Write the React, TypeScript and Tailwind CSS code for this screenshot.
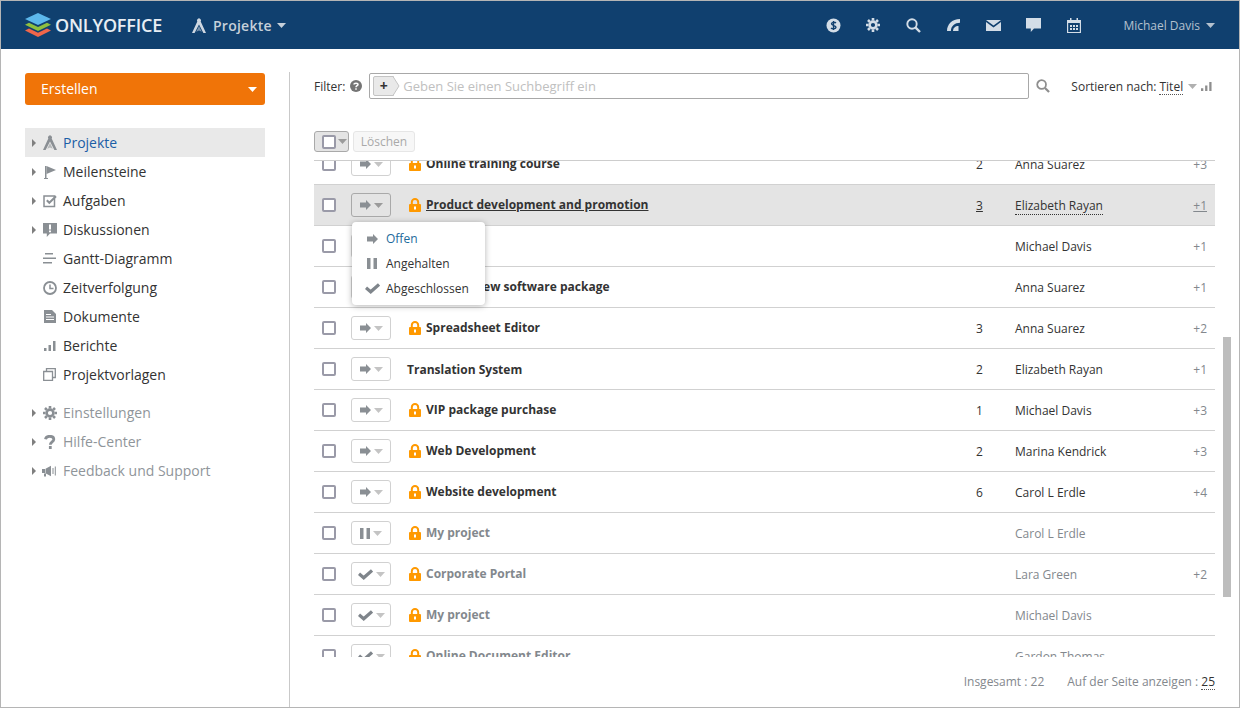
import type { ReactNode } from "react";

const font = "font-['Open_Sans',sans-serif]";

function Caret({ className = "" }: { className?: string }) {
  return (
    <svg width="9" height="5" viewBox="0 0 9 5" className={className} fill="currentColor">
      <path d="M0 0h9L4.500 5z" />
    </svg>
  );
}

function SideArrow() {
  return (
    <svg width="4" height="8" viewBox="0 0 4 8" fill="#7f7f7f">
      <path d="M0 0l4 4-4 4z" />
    </svg>
  );
}

function Logo() {
  return (
    <svg width="26" height="24" viewBox="0 0 26 24">
      <path d="M0 17.500l4-1.900 9 4.200 9-4.200 4 1.900L13 24z" fill="#f0664a" />
      <path d="M0 11.700l4-1.900 9 4.200 9-4.200 4 1.900L13 18z" fill="#8ec03f" />
      <path d="M0 6l13-6 13 6-13 6z" fill="#5cb8ec" />
    </svg>
  );
}

function CompassIcon({ color = "#8a8f94", size = 14 }: { color?: string; size?: number }) {
  return (
    <svg width={size} height={size + 1} viewBox="0 0 14 15" fill={color}>
      <path d="M5.300 3.500a2 2 0 1 1 3.400 0L14 15h-2.600L7 6.500 2.600 15H0z" />
      <path d="M7 8l2.800 5.800L7 12.500l-2.800 1.300z" opacity="0.55" />
    </svg>
  );
}

function FlagIcon() {
  return (
    <svg width="14" height="14" viewBox="0 0 14 14" fill="#8a8f94">
      <path d="M2 1h1.500v12H5v1H1v-1h1z" />
      <path d="M3.500 1L13 5 3.500 9z" />
    </svg>
  );
}

function TaskIcon() {
  return (
    <svg width="14" height="14" viewBox="0 0 14 14" fill="none">
      <path d="M1 2h10.500v10.500H1z" stroke="#8a8f94" strokeWidth="1.500" />
      <path d="M3.800 6.300l2.500 2.500L13 2.300" stroke="#8a8f94" strokeWidth="2" />
    </svg>
  );
}

function DiscussIcon() {
  return (
    <svg width="14" height="14" viewBox="0 0 14 14">
      <path d="M0 0h14v10.500H7L3.800 14v-3.500H0z" fill="#8a8f94" />
      <path d="M6 1.500h2v5H6zM6 7.500h2v1.800H6z" fill="#fff" />
    </svg>
  );
}

function GanttIcon() {
  return (
    <svg width="13" height="11" viewBox="0 0 13 11" fill="#8a8f94">
      <path d="M2 0h8v1.500H2zM0 4.500h13V6H0zM0 9h9v1.500H0z" />
    </svg>
  );
}

function ClockIcon() {
  return (
    <svg width="14" height="14" viewBox="0 0 14 14" fill="none" stroke="#8a8f94">
      <circle cx="7" cy="7" r="6" strokeWidth="1.800" />
      <path d="M7 3.500V7.500H10.500" strokeWidth="1.500" />
    </svg>
  );
}

function DocIcon() {
  return (
    <svg width="12" height="13" viewBox="0 0 12 13">
      <path d="M0 0h8l4 4v9H0z" fill="#8a8f94" />
      <path d="M2 4h5v1H2zM2 6.500h8v1H2zM2 9h8v1H2z" fill="#fff" />
    </svg>
  );
}

function ChartIcon({ color = "#8a8f94", size = 12 }: { color?: string; size?: number }) {
  return (
    <svg width={size} height={size} viewBox="0 0 12 12" fill={color}>
      <path d="M0 8h2.500v3H0zM4.500 5H7v6H4.500zM9 1h2.500v10H9z" />
    </svg>
  );
}

function TemplateIcon() {
  return (
    <svg width="13" height="13" viewBox="0 0 13 13" fill="none" stroke="#8a8f94" strokeWidth="1.300">
      <path d="M.7 3.500h8.800v8.800H.7z" />
      <path d="M3.500 3.500V.7h8.800v8.800H9.500" />
    </svg>
  );
}

function GearIcon({ color = "#8a8f94", size = 14 }: { color?: string; size?: number }) {
  return (
    <svg width={size} height={size} viewBox="0 0 14 14" fill="none" stroke={color}>
      <circle cx="7" cy="7" r="3.400" strokeWidth="2.600" />
      <path
        d="M7 0v2.500M7 11.500V14M0 7h2.500M11.500 7H14M2 2l1.800 1.800M10.200 10.200L12 12M2 12l1.800-1.800M10.200 3.800L12 2"
        strokeWidth="2.600"
      />
    </svg>
  );
}

function HelpIcon() {
  return (
    <svg width="12" height="14" viewBox="0 0 12 14" fill="none" stroke="#8a8f94" strokeWidth="2.800">
      <path d="M1.500 4.200C1.800 2.300 3.700 1.300 5.800 1.300c2.300 0 4 1.100 4 3 0 2.600-3.500 2.600-3.500 5.400" />
      <path d="M6.300 11v3" />
    </svg>
  );
}

function MegaphoneIcon() {
  return (
    <svg width="15" height="12" viewBox="0 0 15 12" fill="#8a8f94">
      <path d="M0 4h3v4H0zM3.500 3.800L9 .8v10.400L3.500 8.200zM2 8.500h2v3H2z" />
      <path d="M10.500 3h1v6h-1zM12.800 1.500h1v9h-1z" />
    </svg>
  );
}

function SearchIcon({ color, size }: { color: string; size: number }) {
  return (
    <svg width={size} height={size} viewBox="0 0 15 15" fill="none" stroke={color}>
      <circle cx="6" cy="6" r="4.700" strokeWidth="1.900" />
      <path d="M9.600 9.600L14 14" strokeWidth="2.400" />
    </svg>
  );
}

function ArrowStatus({ color = "#8a8f94" }: { color?: string }) {
  return (
    <svg width="11" height="10" viewBox="0 0 11 10" fill={color}>
      <path d="M0 2.500h6V0l5 5-5 5V7.500H0z" />
    </svg>
  );
}

function PauseStatus() {
  return (
    <svg width="10" height="11" viewBox="0 0 10 11" fill="#8a8f94">
      <path d="M0 0h3.500v11H0zM6.500 0H10v11H6.500z" />
    </svg>
  );
}

function CheckStatus() {
  return (
    <svg width="15" height="11" viewBox="0 0 15 11" fill="none" stroke="#7f858b" strokeWidth="3.200">
      <path d="M1 4.800l4.700 4L14 1.400" />
    </svg>
  );
}

function LockIcon() {
  return (
    <svg width="12" height="14" viewBox="0 0 12 14" className="shrink-0">
      <path d="M2.800 6.500V4.300a3.200 3.200 0 0 1 6.400 0v2.200" fill="none" stroke="#ff9900" strokeWidth="2" />
      <rect y="6" width="12" height="8" rx="1" fill="#ff9900" />
      <rect x="5" y="8.500" width="2" height="3" fill="#fff" />
    </svg>
  );
}

function Checkbox() {
  return <span className="block w-[14px] h-[14px] rounded-[2px] border-2 border-[#9a9aa8] bg-white shrink-0" />;
}

type NavItem = { label: string; icon: ReactNode; arrow?: boolean; active?: boolean };

const mainNav: NavItem[] = [
  { label: "Projekte", icon: <CompassIcon />, arrow: true, active: true },
  { label: "Meilensteine", icon: <FlagIcon />, arrow: true },
  { label: "Aufgaben", icon: <TaskIcon />, arrow: true },
  { label: "Diskussionen", icon: <DiscussIcon />, arrow: true },
  { label: "Gantt-Diagramm", icon: <GanttIcon /> },
  { label: "Zeitverfolgung", icon: <ClockIcon /> },
  { label: "Dokumente", icon: <DocIcon /> },
  { label: "Berichte", icon: <ChartIcon /> },
  { label: "Projektvorlagen", icon: <TemplateIcon /> },
];

const bottomNav: NavItem[] = [
  { label: "Einstellungen", icon: <GearIcon />, arrow: true },
  { label: "Hilfe-Center", icon: <HelpIcon />, arrow: true },
  { label: "Feedback und Support", icon: <MegaphoneIcon />, arrow: true },
];

function NavRow({ item, muted }: { item: NavItem; muted?: boolean }) {
  return (
    <div className={`flex items-center h-[29px] text-[14px] ${item.active ? "bg-[#e9e9e9] text-[#1b5ea6]" : muted ? "text-[#8f959a]" : "text-[#333]"}`}>
      <span className="w-[7px] ml-[7px] flex justify-start">{item.arrow && <SideArrow />}</span>
      <span className="w-[15px] ml-[3px] flex justify-center">{item.icon}</span>
      <span className="ml-[6px]">{item.label}</span>
    </div>
  );
}

type Project = {
  name: string;
  status: "open" | "paused" | "done";
  locked?: boolean;
  count?: string;
  person: string;
  extra?: string;
  hover?: boolean;
};

const projects: Project[] = [
  { name: "Online training course", status: "open", locked: true, count: "2", person: "Anna Suarez", extra: "+3" },
  { name: "Product development and promotion", status: "open", locked: true, count: "3", person: "Elizabeth Rayan", extra: "+1", hover: true },
  // these two sit behind the open status menu
  { name: "Project", status: "open", locked: true, person: "Michael Davis", extra: "+1" },
  { name: "Release new software package", status: "open", locked: true, person: "Anna Suarez", extra: "+1" },
  { name: "Spreadsheet Editor", status: "open", locked: true, count: "3", person: "Anna Suarez", extra: "+2" },
  { name: "Translation System", status: "open", count: "2", person: "Elizabeth Rayan", extra: "+1" },
  { name: "VIP package purchase", status: "open", locked: true, count: "1", person: "Michael Davis", extra: "+3" },
  { name: "Web Development", status: "open", locked: true, count: "2", person: "Marina Kendrick", extra: "+3" },
  { name: "Website development", status: "open", locked: true, count: "6", person: "Carol L Erdle", extra: "+4" },
  { name: "My project", status: "paused", locked: true, person: "Carol L Erdle" },
  { name: "Corporate Portal", status: "done", locked: true, person: "Lara Green", extra: "+2" },
  { name: "My project", status: "done", locked: true, person: "Michael Davis" },
  { name: "Online Document Editor", status: "done", locked: true, person: "Gardon Thomas" },
];

function ProjectRow({ p }: { p: Project }) {
  const closed = p.status !== "open";
  return (
    <div className={`flex items-center h-[41px] border-b border-[#d1d1d1] ${p.hover ? "bg-[#e4e4e4]" : ""}`}>
      <span className="ml-[8px] w-[29px]">
        <Checkbox />
      </span>
      <span className={`w-[40px] h-[24px] rounded-[3px] border flex items-center justify-center gap-[3px] shrink-0 ${p.hover ? "border-[#a9a9a9]" : "border-[#d1d1d1]"}`}>
        {p.status === "open" && <ArrowStatus />}
        {p.status === "paused" && <PauseStatus />}
        {p.status === "done" && <CheckStatus />}
        <Caret className={p.hover ? "text-[#9b9b9b]" : "text-[#c4c4c4]"} />
      </span>
      <div className={`w-[585px] flex items-center text-[12px] font-bold ${p.locked ? "pl-[18px] gap-[5px]" : "pl-[16px] pt-[2px]"} ${closed ? "text-[#83888d]" : "text-[#333]"}`}>
        {p.locked && <LockIcon />}
        <span className={p.hover ? "underline" : ""}>{p.name}</span>
      </div>
      <span className={`w-[39px] pt-[2px] text-[12px] text-[#333] ${p.hover ? "underline" : ""}`}>{p.count}</span>
      <span className={`w-[176px] pt-[2px] text-[12px] ${closed ? "text-[#83888d]" : "text-[#333]"}`}>
        <span className={p.hover ? "border-b border-dotted border-[#333]" : ""}>{p.person}</span>
      </span>
      <span className={`pt-[2px] text-[12px] w-[16px] text-right text-[#83888d] ${p.hover ? "underline" : ""}`}>{p.extra}</span>
    </div>
  );
}

export default function App() {
  return (
    <div className={`w-[1240px] h-[708px] border border-[#b5b5b5] flex flex-col bg-white overflow-hidden relative ${font}`}>
      <header className="h-[48px] bg-[#10406f] flex items-center shrink-0">
        <div className="ml-[24px]">
          <Logo />
        </div>
        <span className="ml-[4px] text-[18px] font-semibold text-[#e8eef4] tracking-[-0.2px]">ONLYOFFICE</span>
        <span className="ml-[30px]">
          <CompassIcon color="#cfd8e2" />
        </span>
        <span className="ml-[7px] text-[14px] font-semibold text-[#c6d0da] tracking-[0.25px]">Projekte</span>
        <Caret className="ml-[5px] text-[#c6d0da]" />
        <div className="ml-auto flex items-center">
          <svg width="15" height="15" viewBox="0 0 15 15">
            <circle cx="7.500" cy="7.500" r="7" fill="#d3dde7" />
            <path d="M10 5C9 4 5.500 4 5.500 5.800S10 7.500 10 9.300 6 11 5 10M7.500 3v9" fill="none" stroke="#10406f" strokeWidth="1.400" />
          </svg>
          <span className="ml-[25px]">
            <GearIcon color="#d3dde7" />
          </span>
          <span className="ml-[26px]">
            <SearchIcon color="#d3dde7" size={15} />
          </span>
          <svg width="13" height="12" viewBox="0 0 13 12" fill="#d3dde7" className="ml-[26px]">
            <path d="M0 12C0 5.500 5 0 13 0v3.800C8 3.800 3.900 7 3.900 12z" />
            <path d="M6 12c0-3 2.300-5 5.500-5v5z" />
          </svg>
          <svg width="15" height="11" viewBox="0 0 15 11" fill="#d3dde7" className="ml-[26px]">
            <path d="M0 0h15L7.500 5.500zM0 2l7.500 5.500L15 2v9H0z" />
          </svg>
          <svg width="15" height="14" viewBox="0 0 15 14" fill="#d3dde7" className="ml-[25px]">
            <path d="M0 0h15v10.500H8L4.800 14v-3.500H0z" />
          </svg>
          <svg width="14" height="15" viewBox="0 0 14 15" className="ml-[26px]" fill="none">
            <path d="M.6 2.500h12.800v12H.6z" stroke="#d3dde7" strokeWidth="1.200" />
            <path d="M0 2h14v3H0zM3 0h1.500v2H3zM9.500 0H11v2H9.500z" fill="#d3dde7" />
            <path d="M3 7h2v2H3zM6 7h2v2H6zM9 7h2v2H9zM3 10h2v2H3zM6 10h2v2H6zM9 10h2v2H9z" fill="#d3dde7" />
          </svg>
          <span className="ml-[42px] pt-[1px] text-[12px] text-[#b4c1ce]">Michael Davis</span>
          <Caret className="ml-[6px] mr-[24px] text-[#b4c1ce]" />
        </div>
      </header>

      <div className="flex flex-1 min-h-0">
        <aside className="w-[288px] shrink-0 pl-[24px] pr-[24px] pt-[24px]">
          <div className="h-[32px] rounded-[3px] bg-[#f07408] flex items-center justify-between pl-[16px] pr-[8px] pb-[2px] text-white text-[14px]">
            <span>Erstellen</span>
            <Caret className="mt-[2px]" />
          </div>
          <nav className="mt-[23px]">
            {mainNav.map((item) => (
              <NavRow key={item.label} item={item} />
            ))}
          </nav>
          <nav className="mt-[9px]">
            {bottomNav.map((item) => (
              <NavRow key={item.label} item={item} muted />
            ))}
          </nav>
        </aside>

        <main className="flex-1 min-w-0 mt-[23px] border-l border-[#c9c9c9] pl-[24px] pr-[24px] flex flex-col">
          <div className="flex items-center h-[26px] mt-[1px] text-[12px] text-[#333]">
            <span className="pt-[2px]">Filter:</span>
            <svg width="12" height="12" viewBox="0 0 12 12" className="ml-[5px]">
              <circle cx="6" cy="6" r="6" fill="#757575" />
              <path d="M4 4.500C4 2.800 8 2.800 8 4.500 8 5.800 6 5.600 6 7.300M6 8.300v1.500" fill="none" stroke="#fff" strokeWidth="1.500" />
            </svg>
            <div className="ml-[7px] w-[660px] h-[26px] rounded-[2px] border border-[#a8a8a8] flex items-center pl-[3px]">
              <span className="h-[20px] w-[21px] bg-[#e9e9e9] border border-[#c4c4c4] rounded-l-[2px] flex items-center justify-center font-bold text-[14px] text-[#333] leading-none">+</span>
              <svg width="7" height="20" viewBox="0 0 7 20" className="-ml-px">
                <path d="M0 0.500L6 10 0 19.500" fill="#e9e9e9" stroke="#c4c4c4" />
              </svg>
              <span className="ml-[3px] pt-[1px] text-[13px] text-[#c0c0c0]">Geben Sie einen Suchbegriff ein</span>
            </div>
            <span className="ml-[7px]">
              <SearchIcon color="#8e8e8e" size={14} />
            </span>
            <span className="ml-[21px] pt-[2px]">Sortieren nach:</span>
            <span className="ml-[3px] mt-[2px] border-b border-dotted border-[#555] leading-[15px]">Titel</span>
            <Caret className="ml-[5px] text-[#b0b0b0]" />
            <span className="ml-[4px]">
              <ChartIcon color="#8e8e8e" size={11} />
            </span>
          </div>

          <div className="flex items-center mt-[32px] h-[21px]">
            <span className="w-[35px] h-[21px] rounded-[3px] border border-[#a9a9a9] bg-[#e4e4e4] flex items-center pl-[7px] gap-[2px]">
              <Checkbox />
              <Caret className="text-[#9b9b9b]" />
            </span>
            <span className="ml-[4px] w-[62px] h-[21px] rounded-[3px] border border-[#e6e6e6] bg-[#f7f7f7] flex items-center justify-center text-[12px] text-[#a9a9a9]">Löschen</span>
          </div>

          <div className="mt-[8px] h-[497px] overflow-hidden border-t border-[#cdcdcd]">
            <div className="-mt-[17px]">
              {projects.map((p, i) => (
                <ProjectRow key={i} p={p} />
              ))}
            </div>
          </div>

          <div className="flex-1 flex items-center justify-end text-[12px] text-[#83888d] pb-[1px]">
            <span>Insgesamt : 22</span>
            <span className="ml-[23px]">Auf der Seite anzeigen :</span>
            <span className="ml-[3px] text-[#333] border-b border-dotted border-[#555] leading-[15px]">25</span>
          </div>
        </main>
      </div>

      <div className="absolute left-[1222px] top-[336px] w-[8px] h-[260px] bg-[#bdbdbd]" />

      <div className="absolute left-[351px] top-[221px] w-[133px] h-[83px] bg-white rounded-[4px] shadow-[0_1px_6px_rgba(0,0,0,0.3)] pt-[4px] text-[12px] text-[#333]">
        <div className="flex items-center h-[25px]">
          <span className="w-[34px] flex justify-center pl-[6px]"><ArrowStatus /></span>
          <span className="text-[#1d6a9c] pt-[1px]">Offen</span>
        </div>
        <div className="flex items-center h-[25px]">
          <span className="w-[34px] flex justify-center pl-[6px]"><PauseStatus /></span>
          <span className="pt-[1px]">Angehalten</span>
        </div>
        <div className="flex items-center h-[25px]">
          <span className="w-[34px] flex justify-center pl-[6px]"><CheckStatus /></span>
          <span className="pt-[1px]">Abgeschlossen</span>
        </div>
      </div>
    </div>
  );
}
